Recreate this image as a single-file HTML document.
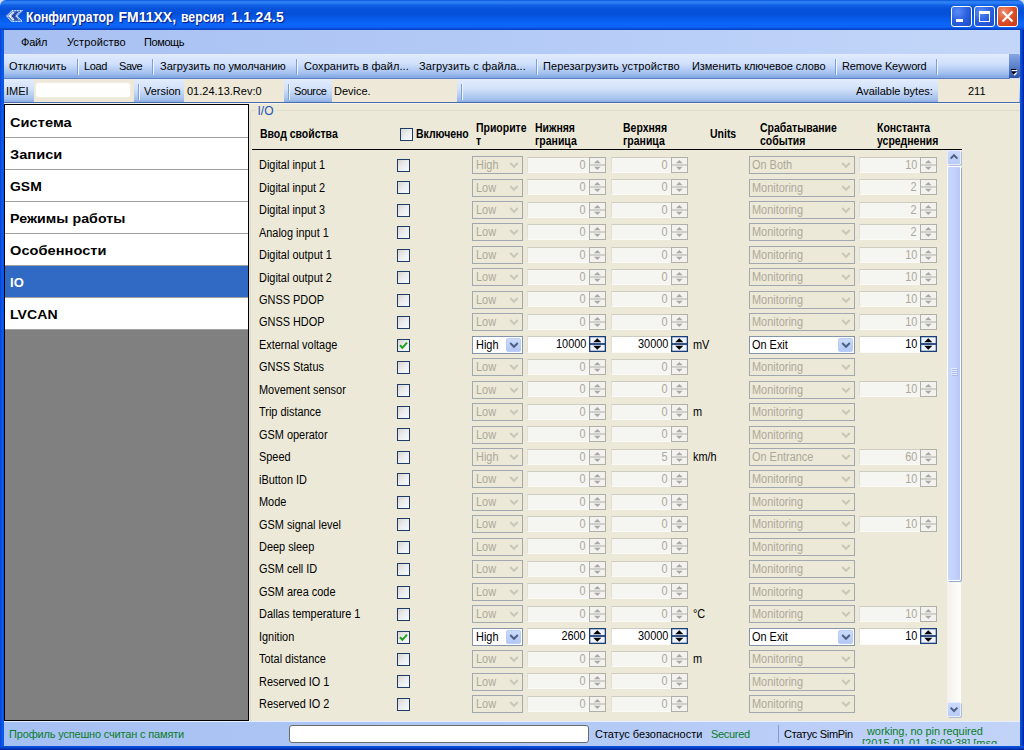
<!DOCTYPE html>
<html><head><meta charset="utf-8"><title>FM11XX</title>
<style>
*{box-sizing:border-box;margin:0;padding:0}
html,body{width:1024px;height:750px;overflow:hidden;background:#D4DCF2;font-family:"Liberation Sans",sans-serif;font-size:11px;color:#000}
.abs,.lbl,.ck,.cb,.nb,.sp{position:absolute}
#title{position:absolute;left:0;top:0;width:1024px;height:30px;background:linear-gradient(#0A55D8 0,#2A7CF2 5%,#2E80F4 10%,#1061E6 17%,#0652DA 30%,#0550D8 47%,#085CEC 65%,#0C66F8 80%,#0C62F4 91%,#0848D0 96%,#0540C4 100%);border-radius:6px 6px 0 0}
#title .tt{position:absolute;left:25px;top:9px;font-weight:bold;font-size:14px;color:#fff;letter-spacing:0;transform-origin:0 0;text-shadow:1px 1px 1px #0A1883;white-space:nowrap}
#bl{position:absolute;left:0;top:30px;width:4px;height:720px;background:linear-gradient(90deg,#0A3FD0,#0C5CEE 50%,#0A55E0)}
#br{position:absolute;left:1020px;top:30px;width:4px;height:720px;background:linear-gradient(90deg,#0855DD,#0542C8 50%,#001EA0)}
#bb{position:absolute;left:0;top:746px;width:1024px;height:4px;background:linear-gradient(#0855DD,#0542C8 50%,#001EA0)}
#menu{position:absolute;left:4px;top:30px;width:1016px;height:24px;background:linear-gradient(90deg,#A8C0F1,#B2C9F6 45%,#BFD3F8 85%,#C3D6F9)}
#menu span{position:absolute;top:6px;font-size:11px;white-space:nowrap}
#tool{position:absolute;left:4px;top:54px;width:1006px;height:25px;background:linear-gradient(#E1EBFD 0,#D0E0FB 40%,#A6C2F0 78%,#86A9E4 96%);border-bottom:1px solid #5C80C4}
#tool span{position:absolute;top:6px;font-size:11px;white-space:nowrap}
#tool i{position:absolute;top:5px;width:1px;height:16px;background:#7A9EDB;border-right:1px solid #F0F5FE;width:2px}
#ovf{position:absolute;left:1009px;top:54px;width:11px;height:24px;background:linear-gradient(#86A6E2,#5F82CC 50%,#2C52A6);border-radius:0 2px 2px 0}
#info{position:absolute;left:4px;top:79px;width:1016px;height:24px;background:linear-gradient(#E2ECFC 0,#D3E2FA 40%,#A9C4EE 80%,#86A9E2 100%)}
#info span{position:absolute;top:6px;font-size:11px;white-space:nowrap}
#info .bx{position:absolute;top:0;height:23px;background:#EDE8D8}
#info i{position:absolute;top:5px;width:2px;height:16px;background:#7A9EDB;border-right:1px solid #F0F5FE}
#infob{position:absolute;left:4px;top:102px;width:1016px;height:1px;background:#4A6CA8}
#main{position:absolute;left:4px;top:104px;width:1016px;height:618px;background:#ECE9D8}
#left{position:absolute;left:4px;top:104px;width:245px;height:617px;background:#808080;border:1px solid #000;}
#left:before{content:"";display:block;height:1px;background:#fff}
#left div{height:32px;background:#fff;border-bottom:1px solid #A0A0A0;font-weight:bold;font-size:13px;padding:9px 0 0 5px;white-space:nowrap}
#left div b{display:inline-block;transform:scaleX(1.12);transform-origin:0 0;letter-spacing:0.05px}
#left div.sel{background:#316AC5;color:#fff}
#grp{position:absolute;left:250px;top:110px;width:775px;height:612px;border:1px solid #DFDCCD;border-radius:3px}
#grpl{position:absolute;left:255.5px;top:104px;background:#ECE9D8;color:#2452B4;font-size:12px;padding:0 2px;line-height:14px}
.h{position:absolute;font-weight:bold;font-size:12px;line-height:12.5px;white-space:nowrap;transform:scaleX(.873);transform-origin:0 0}
#hl{position:absolute;left:252px;top:149px;width:710px;height:1px;background:#000}
.lbl{font-size:12px;white-space:nowrap;line-height:16px;transform:scaleX(.91);transform-origin:0 0}
.ck{width:13px;height:13px;border:1px solid #1E3C68;background:linear-gradient(135deg,#DAD5CE,#ECEDF0 50%,#F6F9FF)}
.cb{height:18px;border:1px solid #A1A8B0;background:#ECE9D8;color:#ACA899;font-size:12px}
.cb .t{position:absolute;left:3px;top:1px;line-height:14px;transform:scaleX(.91);transform-origin:0 0;white-space:nowrap}
.cb .btn{position:absolute;right:0px;top:0;width:16px;height:16px}
.cb .a{fill:none;stroke:#C9C7BA;stroke-width:2}
.cb.on{background:#fff;border-color:#8694AA;color:#000}
.cb.on .btn{right:1px;top:1px;width:15px;height:14px;background:linear-gradient(#CADBFC,#B3C8F5);border-radius:2px;border:1px solid #B8CDF6}
.cb.on .btn svg{position:absolute;left:-1px;top:-2px}
.cb.on .a{stroke:#4D6185}
.nb{height:16px;background:#F5F5F2;color:#ACA899;font-size:12px;text-align:right;padding-right:3px;line-height:14px;border-top:1px solid #CFCDC2;border-left:1px solid #E2E0D4;border-bottom:1px solid #FAFAF6}
.nb span{display:inline-block;transform:scaleX(.91);transform-origin:100% 0}
.nb.on{background:#fff;color:#000;height:17px}
.sp{width:17px;height:16px}
.sp .b{fill:#F3F2EE;stroke:#B0AFA8}
.sp .m{stroke:#B0AFA8;stroke-width:1;fill:none}
.sp .a{fill:#A9A9A4;stroke:none}
.sp.on .b{fill:#EEF3FD;stroke:#1C3E78;stroke-width:1.6}
.sp.on .m{stroke:#1C3E78;stroke-width:1.8}
.sp.on .a{fill:#000}
#sbar{position:absolute;left:947px;top:150px;width:14px;height:567px;background:linear-gradient(90deg,#F3F1EC,#FEFEFC)}
#sbar .thumb{position:absolute;left:0;top:16px;width:14px;height:415px;background:linear-gradient(90deg,#C9D7FC,#C1D1FA 60%,#B7C8F4);border:1px solid #fff;border-radius:2px;box-shadow:1px 1px 0 #98A8CC}
#sbar .thumb i{position:absolute;left:3px;width:6px;height:1px;background:#E6EDFE;box-shadow:1px 1px 0 #A9BAE6}
#sbar .ar{position:absolute;left:0;width:14px;height:15px;background:linear-gradient(#CBD9FD,#B9CBF6);border:1px solid #E6EDFD;border-radius:2px;box-shadow:1px 1px 0 #B0BCD8}
#sbar .ar svg{position:absolute;left:0;top:0}
#stat{position:absolute;left:4px;top:721px;width:1016px;height:25px;border-top:1px solid #E8EFFC;overflow:hidden;background:linear-gradient(90deg,#A5C0F2,#B0C8F5 50%,#C2D3F8);}
#stat span{position:absolute;top:6px;font-size:11px;white-space:nowrap}

.tb{position:absolute;top:6px;width:21px;height:21px;border:1px solid #fff;border-radius:3px;background:radial-gradient(circle at 30% 25%,#5B8DF5,#2A5FE0 50%,#1C49C8 100%)}
.tb.cl{background:radial-gradient(circle at 30% 25%,#F09070,#DC4A26 55%,#C23A14 100%)}
#bl,#br,#bb{z-index:5}
#stat{z-index:4}

</style></head><body>
<div id="title">
<svg class="abs" style="left:6px;top:10px" width="17" height="12" viewBox="0 0 17 12"><path d="M0.7 6 L5.8 0.6 L16 0.6 L11 6 L16 11.4 L5.8 11.4 Z" fill="#2F62D8" stroke="#F2F6FF" stroke-width="1.1" stroke-dasharray="1 0.55"/><path d="M7.6 2 L3.6 6 L7.6 10" fill="none" stroke="#FBFCFF" stroke-width="2.2" stroke-dasharray="1.3 0.35"/><path d="M11 2 L7 6 L11 10" fill="none" stroke="#27386E" stroke-width="1.8" stroke-dasharray="1 0.8"/><path d="M13.4 2.2 L9.8 6 L13.4 9.8" fill="none" stroke="#DCE6FF" stroke-width="1.2" stroke-dasharray="1 0.8"/></svg>
<div class="tt" style="left:26px;transform:scaleX(.875)">Конфигуратор</div><div class="tt" style="left:118.5px;letter-spacing:0">FM11XX,</div><div class="tt" style="left:181px;transform:scaleX(.875)">версия</div><div class="tt" style="left:231px;letter-spacing:0.3px">1.1.24.5</div>
<div class="tb" style="left:951px"><i style="position:absolute;left:4px;top:12px;width:7px;height:3px;background:#fff"></i></div>
<div class="tb" style="left:974px"><i style="position:absolute;left:4px;top:4px;width:11px;height:11px;border:1px solid #fff;border-top-width:3px"></i></div>
<div class="tb cl" style="left:997px"><svg width="19" height="19" viewBox="0 0 19 19" style="position:absolute;left:0;top:0"><path d="M4.5 4.5 L14.5 14.5 M14.5 4.5 L4.5 14.5" stroke="#fff" stroke-width="2.2" fill="none"/></svg></div>
</div>
<div id="bl"></div><div id="br"></div>
<div id="menu"><span style="left:17px;letter-spacing:-0.2px">Файл</span><span style="left:63px;letter-spacing:0.12px">Устройство</span><span style="left:140px;letter-spacing:-0.4px">Помощь</span></div>
<div id="tool">
<span style="left:5px;letter-spacing:0.25px">Отключить</span><i style="left:73px"></i>
<span style="left:80px;letter-spacing:-0.35px">Load</span><span style="left:115px;letter-spacing:-0.45px">Save</span><i style="left:148px"></i>
<span style="left:156px">Загрузить по умолчанию</span><i style="left:292px"></i>
<span style="left:300px;letter-spacing:0.07px">Сохранить в файл...</span><span style="left:415px;letter-spacing:0.1px">Загрузить с файла...</span><i style="left:532px"></i>
<span style="left:539px;letter-spacing:0.1px">Перезагрузить устройство</span><span style="left:688px;letter-spacing:-0.06px">Изменить ключевое слово</span><i style="left:831px"></i>
<span style="left:838px;letter-spacing:-0.16px">Remove Keyword</span><i style="left:932px"></i>
</div>
<div id="ovf"><svg class="abs" style="left:1px;top:14px" width="9" height="9" viewBox="0 0 9 9"><path d="M2 2.5 H7" stroke="#fff" stroke-width="1"/><path d="M2 4.5 H7.5 L4.75 7.8 Z" fill="#fff"/><path d="M1 1.5 H6" stroke="#000" stroke-width="1"/><path d="M1 3.5 H6.5 L3.75 6.6 Z" fill="#000"/></svg></div>
<div id="info">
<span style="left:2px">IMEI</span><div class="bx" style="left:30px;width:100px"></div><div class="bx" style="left:32px;width:94px;top:4px;height:14px;background:#FEFEFC;border-radius:3px;box-shadow:0 0 2px #FBF8F0"></div><i style="left:134px"></i>
<span style="left:140px">Version</span><div class="bx" style="left:180px;width:100px"></div><span style="left:183px">01.24.13.Rev:0</span><i style="left:284px"></i>
<span style="left:290px;letter-spacing:-0.4px">Source</span><div class="bx" style="left:328px;width:125px"></div><span style="left:330px">Device.</span><i style="left:457px"></i>
<span style="left:852px">Available bytes:</span><div class="bx" style="left:934px;width:81px"></div><span style="left:964px">211</span>
</div>
<div id="infob"></div><div class="abs" style="left:4px;top:103px;width:1016px;height:1px;background:#F6F4EC"></div>
<div id="main"></div>
<div id="left"><div><b>Система</b></div><div><b>Записи</b></div><div><b style="transform:scaleX(1.07)">GSM</b></div><div><b style="transform:scaleX(1.09)">Режимы работы</b></div><div><b>Особенности</b></div><div class="sel"><b style="transform:scaleX(1.0)">IO</b></div><div><b style="transform:scaleX(1.08)">LVCAN</b></div></div>
<div id="grp"></div><div id="grpl">I/O</div>
<div class="h" style="left:259.5px;top:128px">Ввод свойства</div>
<div class="ck" style="left:400px;top:128px"></div>
<div class="h" style="left:416px;top:128px">Включено</div>
<div class="h" style="left:475.5px;top:122px">Приорите<br>т</div>
<div class="h" style="left:535px;top:122px">Нижняя<br>граница</div>
<div class="h" style="left:622.5px;top:122px">Верхняя<br>граница</div>
<div class="h" style="left:710px;top:128px">Units</div>
<div class="h" style="left:760px;top:122px">Срабатывание<br>события</div>
<div class="h" style="left:877px;top:122px">Константа<br>усреднения</div>
<div id="hl"></div>
<div class="lbl" style="left:259px;top:157px">Digital input 1</div>
<div class="ck" style="left:397px;top:159px"></div>
<div class="cb" style="left:472px;top:156px;width:51px"><span class="t" style="left:3px">High</span><span class="btn"><svg width="16" height="16" viewBox="0 0 16 16"><path d="M4.2 6 L8 9.8 L11.8 6" class="a"/></svg></span></div>
<div class="nb" style="left:527px;top:157px;width:62px"><span>0</span></div><div class="sp" style="left:589px;top:157px"><svg width="17" height="16" viewBox="0 0 17 16"><rect x="0.5" y="0.5" width="16" height="15" class="b"/><path d="M0.5 8 H16.5" class="m"/><path d="M5 6.2 L8.3 2.9 L11.6 6.2 Z" class="a"/><path d="M5 9.8 L8.3 13.1 L11.6 9.8 Z" class="a"/></svg></div>
<div class="nb" style="left:611px;top:157px;width:60px"><span>0</span></div><div class="sp" style="left:671px;top:157px"><svg width="17" height="16" viewBox="0 0 17 16"><rect x="0.5" y="0.5" width="16" height="15" class="b"/><path d="M0.5 8 H16.5" class="m"/><path d="M5 6.2 L8.3 2.9 L11.6 6.2 Z" class="a"/><path d="M5 9.8 L8.3 13.1 L11.6 9.8 Z" class="a"/></svg></div>
<div class="cb" style="left:749px;top:156px;width:106px"><span class="t" style="left:2px">On Both</span><span class="btn"><svg width="16" height="16" viewBox="0 0 16 16"><path d="M4.2 6 L8 9.8 L11.8 6" class="a"/></svg></span></div>
<div class="nb" style="left:859px;top:157px;width:61px"><span>10</span></div><div class="sp" style="left:920px;top:157px"><svg width="17" height="16" viewBox="0 0 17 16"><rect x="0.5" y="0.5" width="16" height="15" class="b"/><path d="M0.5 8 H16.5" class="m"/><path d="M5 6.2 L8.3 2.9 L11.6 6.2 Z" class="a"/><path d="M5 9.8 L8.3 13.1 L11.6 9.8 Z" class="a"/></svg></div>
<div class="lbl" style="left:259px;top:180px">Digital input 2</div>
<div class="ck" style="left:397px;top:181px"></div>
<div class="cb" style="left:472px;top:179px;width:51px"><span class="t" style="left:3px">Low</span><span class="btn"><svg width="16" height="16" viewBox="0 0 16 16"><path d="M4.2 6 L8 9.8 L11.8 6" class="a"/></svg></span></div>
<div class="nb" style="left:527px;top:179px;width:62px"><span>0</span></div><div class="sp" style="left:589px;top:179px"><svg width="17" height="16" viewBox="0 0 17 16"><rect x="0.5" y="0.5" width="16" height="15" class="b"/><path d="M0.5 8 H16.5" class="m"/><path d="M5 6.2 L8.3 2.9 L11.6 6.2 Z" class="a"/><path d="M5 9.8 L8.3 13.1 L11.6 9.8 Z" class="a"/></svg></div>
<div class="nb" style="left:611px;top:179px;width:60px"><span>0</span></div><div class="sp" style="left:671px;top:179px"><svg width="17" height="16" viewBox="0 0 17 16"><rect x="0.5" y="0.5" width="16" height="15" class="b"/><path d="M0.5 8 H16.5" class="m"/><path d="M5 6.2 L8.3 2.9 L11.6 6.2 Z" class="a"/><path d="M5 9.8 L8.3 13.1 L11.6 9.8 Z" class="a"/></svg></div>
<div class="cb" style="left:749px;top:179px;width:106px"><span class="t" style="left:2px">Monitoring</span><span class="btn"><svg width="16" height="16" viewBox="0 0 16 16"><path d="M4.2 6 L8 9.8 L11.8 6" class="a"/></svg></span></div>
<div class="nb" style="left:859px;top:179px;width:61px"><span>2</span></div><div class="sp" style="left:920px;top:179px"><svg width="17" height="16" viewBox="0 0 17 16"><rect x="0.5" y="0.5" width="16" height="15" class="b"/><path d="M0.5 8 H16.5" class="m"/><path d="M5 6.2 L8.3 2.9 L11.6 6.2 Z" class="a"/><path d="M5 9.8 L8.3 13.1 L11.6 9.8 Z" class="a"/></svg></div>
<div class="lbl" style="left:259px;top:202px">Digital input 3</div>
<div class="ck" style="left:397px;top:204px"></div>
<div class="cb" style="left:472px;top:201px;width:51px"><span class="t" style="left:3px">Low</span><span class="btn"><svg width="16" height="16" viewBox="0 0 16 16"><path d="M4.2 6 L8 9.8 L11.8 6" class="a"/></svg></span></div>
<div class="nb" style="left:527px;top:202px;width:62px"><span>0</span></div><div class="sp" style="left:589px;top:202px"><svg width="17" height="16" viewBox="0 0 17 16"><rect x="0.5" y="0.5" width="16" height="15" class="b"/><path d="M0.5 8 H16.5" class="m"/><path d="M5 6.2 L8.3 2.9 L11.6 6.2 Z" class="a"/><path d="M5 9.8 L8.3 13.1 L11.6 9.8 Z" class="a"/></svg></div>
<div class="nb" style="left:611px;top:202px;width:60px"><span>0</span></div><div class="sp" style="left:671px;top:202px"><svg width="17" height="16" viewBox="0 0 17 16"><rect x="0.5" y="0.5" width="16" height="15" class="b"/><path d="M0.5 8 H16.5" class="m"/><path d="M5 6.2 L8.3 2.9 L11.6 6.2 Z" class="a"/><path d="M5 9.8 L8.3 13.1 L11.6 9.8 Z" class="a"/></svg></div>
<div class="cb" style="left:749px;top:201px;width:106px"><span class="t" style="left:2px">Monitoring</span><span class="btn"><svg width="16" height="16" viewBox="0 0 16 16"><path d="M4.2 6 L8 9.8 L11.8 6" class="a"/></svg></span></div>
<div class="nb" style="left:859px;top:202px;width:61px"><span>2</span></div><div class="sp" style="left:920px;top:202px"><svg width="17" height="16" viewBox="0 0 17 16"><rect x="0.5" y="0.5" width="16" height="15" class="b"/><path d="M0.5 8 H16.5" class="m"/><path d="M5 6.2 L8.3 2.9 L11.6 6.2 Z" class="a"/><path d="M5 9.8 L8.3 13.1 L11.6 9.8 Z" class="a"/></svg></div>
<div class="lbl" style="left:259px;top:225px">Analog input 1</div>
<div class="ck" style="left:397px;top:226px"></div>
<div class="cb" style="left:472px;top:223px;width:51px"><span class="t" style="left:3px">Low</span><span class="btn"><svg width="16" height="16" viewBox="0 0 16 16"><path d="M4.2 6 L8 9.8 L11.8 6" class="a"/></svg></span></div>
<div class="nb" style="left:527px;top:224px;width:62px"><span>0</span></div><div class="sp" style="left:589px;top:224px"><svg width="17" height="16" viewBox="0 0 17 16"><rect x="0.5" y="0.5" width="16" height="15" class="b"/><path d="M0.5 8 H16.5" class="m"/><path d="M5 6.2 L8.3 2.9 L11.6 6.2 Z" class="a"/><path d="M5 9.8 L8.3 13.1 L11.6 9.8 Z" class="a"/></svg></div>
<div class="nb" style="left:611px;top:224px;width:60px"><span>0</span></div><div class="sp" style="left:671px;top:224px"><svg width="17" height="16" viewBox="0 0 17 16"><rect x="0.5" y="0.5" width="16" height="15" class="b"/><path d="M0.5 8 H16.5" class="m"/><path d="M5 6.2 L8.3 2.9 L11.6 6.2 Z" class="a"/><path d="M5 9.8 L8.3 13.1 L11.6 9.8 Z" class="a"/></svg></div>
<div class="cb" style="left:749px;top:223px;width:106px"><span class="t" style="left:2px">Monitoring</span><span class="btn"><svg width="16" height="16" viewBox="0 0 16 16"><path d="M4.2 6 L8 9.8 L11.8 6" class="a"/></svg></span></div>
<div class="nb" style="left:859px;top:224px;width:61px"><span>2</span></div><div class="sp" style="left:920px;top:224px"><svg width="17" height="16" viewBox="0 0 17 16"><rect x="0.5" y="0.5" width="16" height="15" class="b"/><path d="M0.5 8 H16.5" class="m"/><path d="M5 6.2 L8.3 2.9 L11.6 6.2 Z" class="a"/><path d="M5 9.8 L8.3 13.1 L11.6 9.8 Z" class="a"/></svg></div>
<div class="lbl" style="left:259px;top:247px">Digital output 1</div>
<div class="ck" style="left:397px;top:249px"></div>
<div class="cb" style="left:472px;top:246px;width:51px"><span class="t" style="left:3px">Low</span><span class="btn"><svg width="16" height="16" viewBox="0 0 16 16"><path d="M4.2 6 L8 9.8 L11.8 6" class="a"/></svg></span></div>
<div class="nb" style="left:527px;top:247px;width:62px"><span>0</span></div><div class="sp" style="left:589px;top:247px"><svg width="17" height="16" viewBox="0 0 17 16"><rect x="0.5" y="0.5" width="16" height="15" class="b"/><path d="M0.5 8 H16.5" class="m"/><path d="M5 6.2 L8.3 2.9 L11.6 6.2 Z" class="a"/><path d="M5 9.8 L8.3 13.1 L11.6 9.8 Z" class="a"/></svg></div>
<div class="nb" style="left:611px;top:247px;width:60px"><span>0</span></div><div class="sp" style="left:671px;top:247px"><svg width="17" height="16" viewBox="0 0 17 16"><rect x="0.5" y="0.5" width="16" height="15" class="b"/><path d="M0.5 8 H16.5" class="m"/><path d="M5 6.2 L8.3 2.9 L11.6 6.2 Z" class="a"/><path d="M5 9.8 L8.3 13.1 L11.6 9.8 Z" class="a"/></svg></div>
<div class="cb" style="left:749px;top:246px;width:106px"><span class="t" style="left:2px">Monitoring</span><span class="btn"><svg width="16" height="16" viewBox="0 0 16 16"><path d="M4.2 6 L8 9.8 L11.8 6" class="a"/></svg></span></div>
<div class="nb" style="left:859px;top:247px;width:61px"><span>10</span></div><div class="sp" style="left:920px;top:247px"><svg width="17" height="16" viewBox="0 0 17 16"><rect x="0.5" y="0.5" width="16" height="15" class="b"/><path d="M0.5 8 H16.5" class="m"/><path d="M5 6.2 L8.3 2.9 L11.6 6.2 Z" class="a"/><path d="M5 9.8 L8.3 13.1 L11.6 9.8 Z" class="a"/></svg></div>
<div class="lbl" style="left:259px;top:270px">Digital output 2</div>
<div class="ck" style="left:397px;top:271px"></div>
<div class="cb" style="left:472px;top:268px;width:51px"><span class="t" style="left:3px">Low</span><span class="btn"><svg width="16" height="16" viewBox="0 0 16 16"><path d="M4.2 6 L8 9.8 L11.8 6" class="a"/></svg></span></div>
<div class="nb" style="left:527px;top:269px;width:62px"><span>0</span></div><div class="sp" style="left:589px;top:269px"><svg width="17" height="16" viewBox="0 0 17 16"><rect x="0.5" y="0.5" width="16" height="15" class="b"/><path d="M0.5 8 H16.5" class="m"/><path d="M5 6.2 L8.3 2.9 L11.6 6.2 Z" class="a"/><path d="M5 9.8 L8.3 13.1 L11.6 9.8 Z" class="a"/></svg></div>
<div class="nb" style="left:611px;top:269px;width:60px"><span>0</span></div><div class="sp" style="left:671px;top:269px"><svg width="17" height="16" viewBox="0 0 17 16"><rect x="0.5" y="0.5" width="16" height="15" class="b"/><path d="M0.5 8 H16.5" class="m"/><path d="M5 6.2 L8.3 2.9 L11.6 6.2 Z" class="a"/><path d="M5 9.8 L8.3 13.1 L11.6 9.8 Z" class="a"/></svg></div>
<div class="cb" style="left:749px;top:268px;width:106px"><span class="t" style="left:2px">Monitoring</span><span class="btn"><svg width="16" height="16" viewBox="0 0 16 16"><path d="M4.2 6 L8 9.8 L11.8 6" class="a"/></svg></span></div>
<div class="nb" style="left:859px;top:269px;width:61px"><span>10</span></div><div class="sp" style="left:920px;top:269px"><svg width="17" height="16" viewBox="0 0 17 16"><rect x="0.5" y="0.5" width="16" height="15" class="b"/><path d="M0.5 8 H16.5" class="m"/><path d="M5 6.2 L8.3 2.9 L11.6 6.2 Z" class="a"/><path d="M5 9.8 L8.3 13.1 L11.6 9.8 Z" class="a"/></svg></div>
<div class="lbl" style="left:259px;top:292px">GNSS PDOP</div>
<div class="ck" style="left:397px;top:294px"></div>
<div class="cb" style="left:472px;top:291px;width:51px"><span class="t" style="left:3px">Low</span><span class="btn"><svg width="16" height="16" viewBox="0 0 16 16"><path d="M4.2 6 L8 9.8 L11.8 6" class="a"/></svg></span></div>
<div class="nb" style="left:527px;top:291px;width:62px"><span>0</span></div><div class="sp" style="left:589px;top:291px"><svg width="17" height="16" viewBox="0 0 17 16"><rect x="0.5" y="0.5" width="16" height="15" class="b"/><path d="M0.5 8 H16.5" class="m"/><path d="M5 6.2 L8.3 2.9 L11.6 6.2 Z" class="a"/><path d="M5 9.8 L8.3 13.1 L11.6 9.8 Z" class="a"/></svg></div>
<div class="nb" style="left:611px;top:291px;width:60px"><span>0</span></div><div class="sp" style="left:671px;top:291px"><svg width="17" height="16" viewBox="0 0 17 16"><rect x="0.5" y="0.5" width="16" height="15" class="b"/><path d="M0.5 8 H16.5" class="m"/><path d="M5 6.2 L8.3 2.9 L11.6 6.2 Z" class="a"/><path d="M5 9.8 L8.3 13.1 L11.6 9.8 Z" class="a"/></svg></div>
<div class="cb" style="left:749px;top:291px;width:106px"><span class="t" style="left:2px">Monitoring</span><span class="btn"><svg width="16" height="16" viewBox="0 0 16 16"><path d="M4.2 6 L8 9.8 L11.8 6" class="a"/></svg></span></div>
<div class="nb" style="left:859px;top:291px;width:61px"><span>10</span></div><div class="sp" style="left:920px;top:291px"><svg width="17" height="16" viewBox="0 0 17 16"><rect x="0.5" y="0.5" width="16" height="15" class="b"/><path d="M0.5 8 H16.5" class="m"/><path d="M5 6.2 L8.3 2.9 L11.6 6.2 Z" class="a"/><path d="M5 9.8 L8.3 13.1 L11.6 9.8 Z" class="a"/></svg></div>
<div class="lbl" style="left:259px;top:314px">GNSS HDOP</div>
<div class="ck" style="left:397px;top:316px"></div>
<div class="cb" style="left:472px;top:313px;width:51px"><span class="t" style="left:3px">Low</span><span class="btn"><svg width="16" height="16" viewBox="0 0 16 16"><path d="M4.2 6 L8 9.8 L11.8 6" class="a"/></svg></span></div>
<div class="nb" style="left:527px;top:314px;width:62px"><span>0</span></div><div class="sp" style="left:589px;top:314px"><svg width="17" height="16" viewBox="0 0 17 16"><rect x="0.5" y="0.5" width="16" height="15" class="b"/><path d="M0.5 8 H16.5" class="m"/><path d="M5 6.2 L8.3 2.9 L11.6 6.2 Z" class="a"/><path d="M5 9.8 L8.3 13.1 L11.6 9.8 Z" class="a"/></svg></div>
<div class="nb" style="left:611px;top:314px;width:60px"><span>0</span></div><div class="sp" style="left:671px;top:314px"><svg width="17" height="16" viewBox="0 0 17 16"><rect x="0.5" y="0.5" width="16" height="15" class="b"/><path d="M0.5 8 H16.5" class="m"/><path d="M5 6.2 L8.3 2.9 L11.6 6.2 Z" class="a"/><path d="M5 9.8 L8.3 13.1 L11.6 9.8 Z" class="a"/></svg></div>
<div class="cb" style="left:749px;top:313px;width:106px"><span class="t" style="left:2px">Monitoring</span><span class="btn"><svg width="16" height="16" viewBox="0 0 16 16"><path d="M4.2 6 L8 9.8 L11.8 6" class="a"/></svg></span></div>
<div class="nb" style="left:859px;top:314px;width:61px"><span>10</span></div><div class="sp" style="left:920px;top:314px"><svg width="17" height="16" viewBox="0 0 17 16"><rect x="0.5" y="0.5" width="16" height="15" class="b"/><path d="M0.5 8 H16.5" class="m"/><path d="M5 6.2 L8.3 2.9 L11.6 6.2 Z" class="a"/><path d="M5 9.8 L8.3 13.1 L11.6 9.8 Z" class="a"/></svg></div>
<div class="lbl" style="left:259px;top:337px">External voltage</div>
<div class="ck" style="left:397px;top:339px"><svg width="11" height="11" viewBox="0 0 11 11"><path d="M2 5.2 L4.4 7.8 L9 2.6" fill="none" stroke="#21A121" stroke-width="2"/></svg></div>
<div class="cb on" style="left:472px;top:336px;width:51px"><span class="t" style="left:3px">High</span><span class="btn"><svg width="16" height="16" viewBox="0 0 16 16"><path d="M4.2 6 L8 9.8 L11.8 6" class="a"/></svg></span></div>
<div class="nb on" style="left:527px;top:336px;width:62px"><span>10000</span></div><div class="sp on" style="left:589px;top:336px"><svg width="17" height="16" viewBox="0 0 17 16"><rect x="0.5" y="0.5" width="16" height="15" class="b"/><path d="M0.5 8 H16.5" class="m"/><path d="M4.2 6.3 L8.3 2.2 L12.4 6.3 Z" class="a"/><path d="M4.2 9.7 L8.3 13.8 L12.4 9.7 Z" class="a"/></svg></div>
<div class="nb on" style="left:611px;top:336px;width:60px"><span>30000</span></div><div class="sp on" style="left:671px;top:336px"><svg width="17" height="16" viewBox="0 0 17 16"><rect x="0.5" y="0.5" width="16" height="15" class="b"/><path d="M0.5 8 H16.5" class="m"/><path d="M4.2 6.3 L8.3 2.2 L12.4 6.3 Z" class="a"/><path d="M4.2 9.7 L8.3 13.8 L12.4 9.7 Z" class="a"/></svg></div>
<div class="lbl" style="left:693px;top:337px">mV</div>
<div class="cb on" style="left:749px;top:336px;width:106px"><span class="t" style="left:2px">On Exit</span><span class="btn"><svg width="16" height="16" viewBox="0 0 16 16"><path d="M4.2 6 L8 9.8 L11.8 6" class="a"/></svg></span></div>
<div class="nb on" style="left:859px;top:336px;width:61px"><span>10</span></div><div class="sp on" style="left:920px;top:336px"><svg width="17" height="16" viewBox="0 0 17 16"><rect x="0.5" y="0.5" width="16" height="15" class="b"/><path d="M0.5 8 H16.5" class="m"/><path d="M4.2 6.3 L8.3 2.2 L12.4 6.3 Z" class="a"/><path d="M4.2 9.7 L8.3 13.8 L12.4 9.7 Z" class="a"/></svg></div>
<div class="lbl" style="left:259px;top:359px">GNSS Status</div>
<div class="ck" style="left:397px;top:361px"></div>
<div class="cb" style="left:472px;top:358px;width:51px"><span class="t" style="left:3px">Low</span><span class="btn"><svg width="16" height="16" viewBox="0 0 16 16"><path d="M4.2 6 L8 9.8 L11.8 6" class="a"/></svg></span></div>
<div class="nb" style="left:527px;top:359px;width:62px"><span>0</span></div><div class="sp" style="left:589px;top:359px"><svg width="17" height="16" viewBox="0 0 17 16"><rect x="0.5" y="0.5" width="16" height="15" class="b"/><path d="M0.5 8 H16.5" class="m"/><path d="M5 6.2 L8.3 2.9 L11.6 6.2 Z" class="a"/><path d="M5 9.8 L8.3 13.1 L11.6 9.8 Z" class="a"/></svg></div>
<div class="nb" style="left:611px;top:359px;width:60px"><span>0</span></div><div class="sp" style="left:671px;top:359px"><svg width="17" height="16" viewBox="0 0 17 16"><rect x="0.5" y="0.5" width="16" height="15" class="b"/><path d="M0.5 8 H16.5" class="m"/><path d="M5 6.2 L8.3 2.9 L11.6 6.2 Z" class="a"/><path d="M5 9.8 L8.3 13.1 L11.6 9.8 Z" class="a"/></svg></div>
<div class="cb" style="left:749px;top:358px;width:106px"><span class="t" style="left:2px">Monitoring</span><span class="btn"><svg width="16" height="16" viewBox="0 0 16 16"><path d="M4.2 6 L8 9.8 L11.8 6" class="a"/></svg></span></div>
<div class="lbl" style="left:259px;top:382px">Movement sensor</div>
<div class="ck" style="left:397px;top:384px"></div>
<div class="cb" style="left:472px;top:381px;width:51px"><span class="t" style="left:3px">Low</span><span class="btn"><svg width="16" height="16" viewBox="0 0 16 16"><path d="M4.2 6 L8 9.8 L11.8 6" class="a"/></svg></span></div>
<div class="nb" style="left:527px;top:381px;width:62px"><span>0</span></div><div class="sp" style="left:589px;top:381px"><svg width="17" height="16" viewBox="0 0 17 16"><rect x="0.5" y="0.5" width="16" height="15" class="b"/><path d="M0.5 8 H16.5" class="m"/><path d="M5 6.2 L8.3 2.9 L11.6 6.2 Z" class="a"/><path d="M5 9.8 L8.3 13.1 L11.6 9.8 Z" class="a"/></svg></div>
<div class="nb" style="left:611px;top:381px;width:60px"><span>0</span></div><div class="sp" style="left:671px;top:381px"><svg width="17" height="16" viewBox="0 0 17 16"><rect x="0.5" y="0.5" width="16" height="15" class="b"/><path d="M0.5 8 H16.5" class="m"/><path d="M5 6.2 L8.3 2.9 L11.6 6.2 Z" class="a"/><path d="M5 9.8 L8.3 13.1 L11.6 9.8 Z" class="a"/></svg></div>
<div class="cb" style="left:749px;top:381px;width:106px"><span class="t" style="left:2px">Monitoring</span><span class="btn"><svg width="16" height="16" viewBox="0 0 16 16"><path d="M4.2 6 L8 9.8 L11.8 6" class="a"/></svg></span></div>
<div class="nb" style="left:859px;top:381px;width:61px"><span>10</span></div><div class="sp" style="left:920px;top:381px"><svg width="17" height="16" viewBox="0 0 17 16"><rect x="0.5" y="0.5" width="16" height="15" class="b"/><path d="M0.5 8 H16.5" class="m"/><path d="M5 6.2 L8.3 2.9 L11.6 6.2 Z" class="a"/><path d="M5 9.8 L8.3 13.1 L11.6 9.8 Z" class="a"/></svg></div>
<div class="lbl" style="left:259px;top:404px">Trip distance</div>
<div class="ck" style="left:397px;top:406px"></div>
<div class="cb" style="left:472px;top:403px;width:51px"><span class="t" style="left:3px">Low</span><span class="btn"><svg width="16" height="16" viewBox="0 0 16 16"><path d="M4.2 6 L8 9.8 L11.8 6" class="a"/></svg></span></div>
<div class="nb" style="left:527px;top:404px;width:62px"><span>0</span></div><div class="sp" style="left:589px;top:404px"><svg width="17" height="16" viewBox="0 0 17 16"><rect x="0.5" y="0.5" width="16" height="15" class="b"/><path d="M0.5 8 H16.5" class="m"/><path d="M5 6.2 L8.3 2.9 L11.6 6.2 Z" class="a"/><path d="M5 9.8 L8.3 13.1 L11.6 9.8 Z" class="a"/></svg></div>
<div class="nb" style="left:611px;top:404px;width:60px"><span>0</span></div><div class="sp" style="left:671px;top:404px"><svg width="17" height="16" viewBox="0 0 17 16"><rect x="0.5" y="0.5" width="16" height="15" class="b"/><path d="M0.5 8 H16.5" class="m"/><path d="M5 6.2 L8.3 2.9 L11.6 6.2 Z" class="a"/><path d="M5 9.8 L8.3 13.1 L11.6 9.8 Z" class="a"/></svg></div>
<div class="lbl" style="left:693px;top:404px">m</div>
<div class="cb" style="left:749px;top:403px;width:106px"><span class="t" style="left:2px">Monitoring</span><span class="btn"><svg width="16" height="16" viewBox="0 0 16 16"><path d="M4.2 6 L8 9.8 L11.8 6" class="a"/></svg></span></div>
<div class="lbl" style="left:259px;top:427px">GSM operator</div>
<div class="ck" style="left:397px;top:428px"></div>
<div class="cb" style="left:472px;top:426px;width:51px"><span class="t" style="left:3px">Low</span><span class="btn"><svg width="16" height="16" viewBox="0 0 16 16"><path d="M4.2 6 L8 9.8 L11.8 6" class="a"/></svg></span></div>
<div class="nb" style="left:527px;top:426px;width:62px"><span>0</span></div><div class="sp" style="left:589px;top:426px"><svg width="17" height="16" viewBox="0 0 17 16"><rect x="0.5" y="0.5" width="16" height="15" class="b"/><path d="M0.5 8 H16.5" class="m"/><path d="M5 6.2 L8.3 2.9 L11.6 6.2 Z" class="a"/><path d="M5 9.8 L8.3 13.1 L11.6 9.8 Z" class="a"/></svg></div>
<div class="nb" style="left:611px;top:426px;width:60px"><span>0</span></div><div class="sp" style="left:671px;top:426px"><svg width="17" height="16" viewBox="0 0 17 16"><rect x="0.5" y="0.5" width="16" height="15" class="b"/><path d="M0.5 8 H16.5" class="m"/><path d="M5 6.2 L8.3 2.9 L11.6 6.2 Z" class="a"/><path d="M5 9.8 L8.3 13.1 L11.6 9.8 Z" class="a"/></svg></div>
<div class="cb" style="left:749px;top:426px;width:106px"><span class="t" style="left:2px">Monitoring</span><span class="btn"><svg width="16" height="16" viewBox="0 0 16 16"><path d="M4.2 6 L8 9.8 L11.8 6" class="a"/></svg></span></div>
<div class="lbl" style="left:259px;top:449px">Speed</div>
<div class="ck" style="left:397px;top:451px"></div>
<div class="cb" style="left:472px;top:448px;width:51px"><span class="t" style="left:3px">High</span><span class="btn"><svg width="16" height="16" viewBox="0 0 16 16"><path d="M4.2 6 L8 9.8 L11.8 6" class="a"/></svg></span></div>
<div class="nb" style="left:527px;top:449px;width:62px"><span>0</span></div><div class="sp" style="left:589px;top:449px"><svg width="17" height="16" viewBox="0 0 17 16"><rect x="0.5" y="0.5" width="16" height="15" class="b"/><path d="M0.5 8 H16.5" class="m"/><path d="M5 6.2 L8.3 2.9 L11.6 6.2 Z" class="a"/><path d="M5 9.8 L8.3 13.1 L11.6 9.8 Z" class="a"/></svg></div>
<div class="nb" style="left:611px;top:449px;width:60px"><span>5</span></div><div class="sp" style="left:671px;top:449px"><svg width="17" height="16" viewBox="0 0 17 16"><rect x="0.5" y="0.5" width="16" height="15" class="b"/><path d="M0.5 8 H16.5" class="m"/><path d="M5 6.2 L8.3 2.9 L11.6 6.2 Z" class="a"/><path d="M5 9.8 L8.3 13.1 L11.6 9.8 Z" class="a"/></svg></div>
<div class="lbl" style="left:693px;top:449px">km/h</div>
<div class="cb" style="left:749px;top:448px;width:106px"><span class="t" style="left:2px">On Entrance</span><span class="btn"><svg width="16" height="16" viewBox="0 0 16 16"><path d="M4.2 6 L8 9.8 L11.8 6" class="a"/></svg></span></div>
<div class="nb" style="left:859px;top:449px;width:61px"><span>60</span></div><div class="sp" style="left:920px;top:449px"><svg width="17" height="16" viewBox="0 0 17 16"><rect x="0.5" y="0.5" width="16" height="15" class="b"/><path d="M0.5 8 H16.5" class="m"/><path d="M5 6.2 L8.3 2.9 L11.6 6.2 Z" class="a"/><path d="M5 9.8 L8.3 13.1 L11.6 9.8 Z" class="a"/></svg></div>
<div class="lbl" style="left:259px;top:472px">iButton ID</div>
<div class="ck" style="left:397px;top:473px"></div>
<div class="cb" style="left:472px;top:470px;width:51px"><span class="t" style="left:3px">Low</span><span class="btn"><svg width="16" height="16" viewBox="0 0 16 16"><path d="M4.2 6 L8 9.8 L11.8 6" class="a"/></svg></span></div>
<div class="nb" style="left:527px;top:471px;width:62px"><span>0</span></div><div class="sp" style="left:589px;top:471px"><svg width="17" height="16" viewBox="0 0 17 16"><rect x="0.5" y="0.5" width="16" height="15" class="b"/><path d="M0.5 8 H16.5" class="m"/><path d="M5 6.2 L8.3 2.9 L11.6 6.2 Z" class="a"/><path d="M5 9.8 L8.3 13.1 L11.6 9.8 Z" class="a"/></svg></div>
<div class="nb" style="left:611px;top:471px;width:60px"><span>0</span></div><div class="sp" style="left:671px;top:471px"><svg width="17" height="16" viewBox="0 0 17 16"><rect x="0.5" y="0.5" width="16" height="15" class="b"/><path d="M0.5 8 H16.5" class="m"/><path d="M5 6.2 L8.3 2.9 L11.6 6.2 Z" class="a"/><path d="M5 9.8 L8.3 13.1 L11.6 9.8 Z" class="a"/></svg></div>
<div class="cb" style="left:749px;top:470px;width:106px"><span class="t" style="left:2px">Monitoring</span><span class="btn"><svg width="16" height="16" viewBox="0 0 16 16"><path d="M4.2 6 L8 9.8 L11.8 6" class="a"/></svg></span></div>
<div class="nb" style="left:859px;top:471px;width:61px"><span>10</span></div><div class="sp" style="left:920px;top:471px"><svg width="17" height="16" viewBox="0 0 17 16"><rect x="0.5" y="0.5" width="16" height="15" class="b"/><path d="M0.5 8 H16.5" class="m"/><path d="M5 6.2 L8.3 2.9 L11.6 6.2 Z" class="a"/><path d="M5 9.8 L8.3 13.1 L11.6 9.8 Z" class="a"/></svg></div>
<div class="lbl" style="left:259px;top:494px">Mode</div>
<div class="ck" style="left:397px;top:496px"></div>
<div class="cb" style="left:472px;top:493px;width:51px"><span class="t" style="left:3px">Low</span><span class="btn"><svg width="16" height="16" viewBox="0 0 16 16"><path d="M4.2 6 L8 9.8 L11.8 6" class="a"/></svg></span></div>
<div class="nb" style="left:527px;top:494px;width:62px"><span>0</span></div><div class="sp" style="left:589px;top:494px"><svg width="17" height="16" viewBox="0 0 17 16"><rect x="0.5" y="0.5" width="16" height="15" class="b"/><path d="M0.5 8 H16.5" class="m"/><path d="M5 6.2 L8.3 2.9 L11.6 6.2 Z" class="a"/><path d="M5 9.8 L8.3 13.1 L11.6 9.8 Z" class="a"/></svg></div>
<div class="nb" style="left:611px;top:494px;width:60px"><span>0</span></div><div class="sp" style="left:671px;top:494px"><svg width="17" height="16" viewBox="0 0 17 16"><rect x="0.5" y="0.5" width="16" height="15" class="b"/><path d="M0.5 8 H16.5" class="m"/><path d="M5 6.2 L8.3 2.9 L11.6 6.2 Z" class="a"/><path d="M5 9.8 L8.3 13.1 L11.6 9.8 Z" class="a"/></svg></div>
<div class="cb" style="left:749px;top:493px;width:106px"><span class="t" style="left:2px">Monitoring</span><span class="btn"><svg width="16" height="16" viewBox="0 0 16 16"><path d="M4.2 6 L8 9.8 L11.8 6" class="a"/></svg></span></div>
<div class="lbl" style="left:259px;top:517px">GSM signal level</div>
<div class="ck" style="left:397px;top:518px"></div>
<div class="cb" style="left:472px;top:515px;width:51px"><span class="t" style="left:3px">Low</span><span class="btn"><svg width="16" height="16" viewBox="0 0 16 16"><path d="M4.2 6 L8 9.8 L11.8 6" class="a"/></svg></span></div>
<div class="nb" style="left:527px;top:516px;width:62px"><span>0</span></div><div class="sp" style="left:589px;top:516px"><svg width="17" height="16" viewBox="0 0 17 16"><rect x="0.5" y="0.5" width="16" height="15" class="b"/><path d="M0.5 8 H16.5" class="m"/><path d="M5 6.2 L8.3 2.9 L11.6 6.2 Z" class="a"/><path d="M5 9.8 L8.3 13.1 L11.6 9.8 Z" class="a"/></svg></div>
<div class="nb" style="left:611px;top:516px;width:60px"><span>0</span></div><div class="sp" style="left:671px;top:516px"><svg width="17" height="16" viewBox="0 0 17 16"><rect x="0.5" y="0.5" width="16" height="15" class="b"/><path d="M0.5 8 H16.5" class="m"/><path d="M5 6.2 L8.3 2.9 L11.6 6.2 Z" class="a"/><path d="M5 9.8 L8.3 13.1 L11.6 9.8 Z" class="a"/></svg></div>
<div class="cb" style="left:749px;top:515px;width:106px"><span class="t" style="left:2px">Monitoring</span><span class="btn"><svg width="16" height="16" viewBox="0 0 16 16"><path d="M4.2 6 L8 9.8 L11.8 6" class="a"/></svg></span></div>
<div class="nb" style="left:859px;top:516px;width:61px"><span>10</span></div><div class="sp" style="left:920px;top:516px"><svg width="17" height="16" viewBox="0 0 17 16"><rect x="0.5" y="0.5" width="16" height="15" class="b"/><path d="M0.5 8 H16.5" class="m"/><path d="M5 6.2 L8.3 2.9 L11.6 6.2 Z" class="a"/><path d="M5 9.8 L8.3 13.1 L11.6 9.8 Z" class="a"/></svg></div>
<div class="lbl" style="left:259px;top:539px">Deep sleep</div>
<div class="ck" style="left:397px;top:541px"></div>
<div class="cb" style="left:472px;top:538px;width:51px"><span class="t" style="left:3px">Low</span><span class="btn"><svg width="16" height="16" viewBox="0 0 16 16"><path d="M4.2 6 L8 9.8 L11.8 6" class="a"/></svg></span></div>
<div class="nb" style="left:527px;top:538px;width:62px"><span>0</span></div><div class="sp" style="left:589px;top:538px"><svg width="17" height="16" viewBox="0 0 17 16"><rect x="0.5" y="0.5" width="16" height="15" class="b"/><path d="M0.5 8 H16.5" class="m"/><path d="M5 6.2 L8.3 2.9 L11.6 6.2 Z" class="a"/><path d="M5 9.8 L8.3 13.1 L11.6 9.8 Z" class="a"/></svg></div>
<div class="nb" style="left:611px;top:538px;width:60px"><span>0</span></div><div class="sp" style="left:671px;top:538px"><svg width="17" height="16" viewBox="0 0 17 16"><rect x="0.5" y="0.5" width="16" height="15" class="b"/><path d="M0.5 8 H16.5" class="m"/><path d="M5 6.2 L8.3 2.9 L11.6 6.2 Z" class="a"/><path d="M5 9.8 L8.3 13.1 L11.6 9.8 Z" class="a"/></svg></div>
<div class="cb" style="left:749px;top:538px;width:106px"><span class="t" style="left:2px">Monitoring</span><span class="btn"><svg width="16" height="16" viewBox="0 0 16 16"><path d="M4.2 6 L8 9.8 L11.8 6" class="a"/></svg></span></div>
<div class="lbl" style="left:259px;top:561px">GSM cell ID</div>
<div class="ck" style="left:397px;top:563px"></div>
<div class="cb" style="left:472px;top:560px;width:51px"><span class="t" style="left:3px">Low</span><span class="btn"><svg width="16" height="16" viewBox="0 0 16 16"><path d="M4.2 6 L8 9.8 L11.8 6" class="a"/></svg></span></div>
<div class="nb" style="left:527px;top:561px;width:62px"><span>0</span></div><div class="sp" style="left:589px;top:561px"><svg width="17" height="16" viewBox="0 0 17 16"><rect x="0.5" y="0.5" width="16" height="15" class="b"/><path d="M0.5 8 H16.5" class="m"/><path d="M5 6.2 L8.3 2.9 L11.6 6.2 Z" class="a"/><path d="M5 9.8 L8.3 13.1 L11.6 9.8 Z" class="a"/></svg></div>
<div class="nb" style="left:611px;top:561px;width:60px"><span>0</span></div><div class="sp" style="left:671px;top:561px"><svg width="17" height="16" viewBox="0 0 17 16"><rect x="0.5" y="0.5" width="16" height="15" class="b"/><path d="M0.5 8 H16.5" class="m"/><path d="M5 6.2 L8.3 2.9 L11.6 6.2 Z" class="a"/><path d="M5 9.8 L8.3 13.1 L11.6 9.8 Z" class="a"/></svg></div>
<div class="cb" style="left:749px;top:560px;width:106px"><span class="t" style="left:2px">Monitoring</span><span class="btn"><svg width="16" height="16" viewBox="0 0 16 16"><path d="M4.2 6 L8 9.8 L11.8 6" class="a"/></svg></span></div>
<div class="lbl" style="left:259px;top:584px">GSM area code</div>
<div class="ck" style="left:397px;top:586px"></div>
<div class="cb" style="left:472px;top:583px;width:51px"><span class="t" style="left:3px">Low</span><span class="btn"><svg width="16" height="16" viewBox="0 0 16 16"><path d="M4.2 6 L8 9.8 L11.8 6" class="a"/></svg></span></div>
<div class="nb" style="left:527px;top:583px;width:62px"><span>0</span></div><div class="sp" style="left:589px;top:583px"><svg width="17" height="16" viewBox="0 0 17 16"><rect x="0.5" y="0.5" width="16" height="15" class="b"/><path d="M0.5 8 H16.5" class="m"/><path d="M5 6.2 L8.3 2.9 L11.6 6.2 Z" class="a"/><path d="M5 9.8 L8.3 13.1 L11.6 9.8 Z" class="a"/></svg></div>
<div class="nb" style="left:611px;top:583px;width:60px"><span>0</span></div><div class="sp" style="left:671px;top:583px"><svg width="17" height="16" viewBox="0 0 17 16"><rect x="0.5" y="0.5" width="16" height="15" class="b"/><path d="M0.5 8 H16.5" class="m"/><path d="M5 6.2 L8.3 2.9 L11.6 6.2 Z" class="a"/><path d="M5 9.8 L8.3 13.1 L11.6 9.8 Z" class="a"/></svg></div>
<div class="cb" style="left:749px;top:583px;width:106px"><span class="t" style="left:2px">Monitoring</span><span class="btn"><svg width="16" height="16" viewBox="0 0 16 16"><path d="M4.2 6 L8 9.8 L11.8 6" class="a"/></svg></span></div>
<div class="lbl" style="left:259px;top:606px">Dallas temperature 1</div>
<div class="ck" style="left:397px;top:608px"></div>
<div class="cb" style="left:472px;top:605px;width:51px"><span class="t" style="left:3px">Low</span><span class="btn"><svg width="16" height="16" viewBox="0 0 16 16"><path d="M4.2 6 L8 9.8 L11.8 6" class="a"/></svg></span></div>
<div class="nb" style="left:527px;top:606px;width:62px"><span>0</span></div><div class="sp" style="left:589px;top:606px"><svg width="17" height="16" viewBox="0 0 17 16"><rect x="0.5" y="0.5" width="16" height="15" class="b"/><path d="M0.5 8 H16.5" class="m"/><path d="M5 6.2 L8.3 2.9 L11.6 6.2 Z" class="a"/><path d="M5 9.8 L8.3 13.1 L11.6 9.8 Z" class="a"/></svg></div>
<div class="nb" style="left:611px;top:606px;width:60px"><span>0</span></div><div class="sp" style="left:671px;top:606px"><svg width="17" height="16" viewBox="0 0 17 16"><rect x="0.5" y="0.5" width="16" height="15" class="b"/><path d="M0.5 8 H16.5" class="m"/><path d="M5 6.2 L8.3 2.9 L11.6 6.2 Z" class="a"/><path d="M5 9.8 L8.3 13.1 L11.6 9.8 Z" class="a"/></svg></div>
<div class="lbl" style="left:693px;top:606px">°C</div>
<div class="cb" style="left:749px;top:605px;width:106px"><span class="t" style="left:2px">Monitoring</span><span class="btn"><svg width="16" height="16" viewBox="0 0 16 16"><path d="M4.2 6 L8 9.8 L11.8 6" class="a"/></svg></span></div>
<div class="nb" style="left:859px;top:606px;width:61px"><span>10</span></div><div class="sp" style="left:920px;top:606px"><svg width="17" height="16" viewBox="0 0 17 16"><rect x="0.5" y="0.5" width="16" height="15" class="b"/><path d="M0.5 8 H16.5" class="m"/><path d="M5 6.2 L8.3 2.9 L11.6 6.2 Z" class="a"/><path d="M5 9.8 L8.3 13.1 L11.6 9.8 Z" class="a"/></svg></div>
<div class="lbl" style="left:259px;top:629px">Ignition</div>
<div class="ck" style="left:397px;top:631px"><svg width="11" height="11" viewBox="0 0 11 11"><path d="M2 5.2 L4.4 7.8 L9 2.6" fill="none" stroke="#21A121" stroke-width="2"/></svg></div>
<div class="cb on" style="left:472px;top:628px;width:51px"><span class="t" style="left:3px">High</span><span class="btn"><svg width="16" height="16" viewBox="0 0 16 16"><path d="M4.2 6 L8 9.8 L11.8 6" class="a"/></svg></span></div>
<div class="nb on" style="left:527px;top:628px;width:62px"><span>2600</span></div><div class="sp on" style="left:589px;top:628px"><svg width="17" height="16" viewBox="0 0 17 16"><rect x="0.5" y="0.5" width="16" height="15" class="b"/><path d="M0.5 8 H16.5" class="m"/><path d="M4.2 6.3 L8.3 2.2 L12.4 6.3 Z" class="a"/><path d="M4.2 9.7 L8.3 13.8 L12.4 9.7 Z" class="a"/></svg></div>
<div class="nb on" style="left:611px;top:628px;width:60px"><span>30000</span></div><div class="sp on" style="left:671px;top:628px"><svg width="17" height="16" viewBox="0 0 17 16"><rect x="0.5" y="0.5" width="16" height="15" class="b"/><path d="M0.5 8 H16.5" class="m"/><path d="M4.2 6.3 L8.3 2.2 L12.4 6.3 Z" class="a"/><path d="M4.2 9.7 L8.3 13.8 L12.4 9.7 Z" class="a"/></svg></div>
<div class="cb on" style="left:749px;top:628px;width:106px"><span class="t" style="left:2px">On Exit</span><span class="btn"><svg width="16" height="16" viewBox="0 0 16 16"><path d="M4.2 6 L8 9.8 L11.8 6" class="a"/></svg></span></div>
<div class="nb on" style="left:859px;top:628px;width:61px"><span>10</span></div><div class="sp on" style="left:920px;top:628px"><svg width="17" height="16" viewBox="0 0 17 16"><rect x="0.5" y="0.5" width="16" height="15" class="b"/><path d="M0.5 8 H16.5" class="m"/><path d="M4.2 6.3 L8.3 2.2 L12.4 6.3 Z" class="a"/><path d="M4.2 9.7 L8.3 13.8 L12.4 9.7 Z" class="a"/></svg></div>
<div class="lbl" style="left:259px;top:651px">Total distance</div>
<div class="ck" style="left:397px;top:653px"></div>
<div class="cb" style="left:472px;top:650px;width:51px"><span class="t" style="left:3px">Low</span><span class="btn"><svg width="16" height="16" viewBox="0 0 16 16"><path d="M4.2 6 L8 9.8 L11.8 6" class="a"/></svg></span></div>
<div class="nb" style="left:527px;top:651px;width:62px"><span>0</span></div><div class="sp" style="left:589px;top:651px"><svg width="17" height="16" viewBox="0 0 17 16"><rect x="0.5" y="0.5" width="16" height="15" class="b"/><path d="M0.5 8 H16.5" class="m"/><path d="M5 6.2 L8.3 2.9 L11.6 6.2 Z" class="a"/><path d="M5 9.8 L8.3 13.1 L11.6 9.8 Z" class="a"/></svg></div>
<div class="nb" style="left:611px;top:651px;width:60px"><span>0</span></div><div class="sp" style="left:671px;top:651px"><svg width="17" height="16" viewBox="0 0 17 16"><rect x="0.5" y="0.5" width="16" height="15" class="b"/><path d="M0.5 8 H16.5" class="m"/><path d="M5 6.2 L8.3 2.9 L11.6 6.2 Z" class="a"/><path d="M5 9.8 L8.3 13.1 L11.6 9.8 Z" class="a"/></svg></div>
<div class="lbl" style="left:693px;top:651px">m</div>
<div class="cb" style="left:749px;top:650px;width:106px"><span class="t" style="left:2px">Monitoring</span><span class="btn"><svg width="16" height="16" viewBox="0 0 16 16"><path d="M4.2 6 L8 9.8 L11.8 6" class="a"/></svg></span></div>
<div class="lbl" style="left:259px;top:674px">Reserved IO 1</div>
<div class="ck" style="left:397px;top:675px"></div>
<div class="cb" style="left:472px;top:673px;width:51px"><span class="t" style="left:3px">Low</span><span class="btn"><svg width="16" height="16" viewBox="0 0 16 16"><path d="M4.2 6 L8 9.8 L11.8 6" class="a"/></svg></span></div>
<div class="nb" style="left:527px;top:673px;width:62px"><span>0</span></div><div class="sp" style="left:589px;top:673px"><svg width="17" height="16" viewBox="0 0 17 16"><rect x="0.5" y="0.5" width="16" height="15" class="b"/><path d="M0.5 8 H16.5" class="m"/><path d="M5 6.2 L8.3 2.9 L11.6 6.2 Z" class="a"/><path d="M5 9.8 L8.3 13.1 L11.6 9.8 Z" class="a"/></svg></div>
<div class="nb" style="left:611px;top:673px;width:60px"><span>0</span></div><div class="sp" style="left:671px;top:673px"><svg width="17" height="16" viewBox="0 0 17 16"><rect x="0.5" y="0.5" width="16" height="15" class="b"/><path d="M0.5 8 H16.5" class="m"/><path d="M5 6.2 L8.3 2.9 L11.6 6.2 Z" class="a"/><path d="M5 9.8 L8.3 13.1 L11.6 9.8 Z" class="a"/></svg></div>
<div class="cb" style="left:749px;top:673px;width:106px"><span class="t" style="left:2px">Monitoring</span><span class="btn"><svg width="16" height="16" viewBox="0 0 16 16"><path d="M4.2 6 L8 9.8 L11.8 6" class="a"/></svg></span></div>
<div class="lbl" style="left:259px;top:696px">Reserved IO 2</div>
<div class="ck" style="left:397px;top:698px"></div>
<div class="cb" style="left:472px;top:695px;width:51px"><span class="t" style="left:3px">Low</span><span class="btn"><svg width="16" height="16" viewBox="0 0 16 16"><path d="M4.2 6 L8 9.8 L11.8 6" class="a"/></svg></span></div>
<div class="nb" style="left:527px;top:696px;width:62px"><span>0</span></div><div class="sp" style="left:589px;top:696px"><svg width="17" height="16" viewBox="0 0 17 16"><rect x="0.5" y="0.5" width="16" height="15" class="b"/><path d="M0.5 8 H16.5" class="m"/><path d="M5 6.2 L8.3 2.9 L11.6 6.2 Z" class="a"/><path d="M5 9.8 L8.3 13.1 L11.6 9.8 Z" class="a"/></svg></div>
<div class="nb" style="left:611px;top:696px;width:60px"><span>0</span></div><div class="sp" style="left:671px;top:696px"><svg width="17" height="16" viewBox="0 0 17 16"><rect x="0.5" y="0.5" width="16" height="15" class="b"/><path d="M0.5 8 H16.5" class="m"/><path d="M5 6.2 L8.3 2.9 L11.6 6.2 Z" class="a"/><path d="M5 9.8 L8.3 13.1 L11.6 9.8 Z" class="a"/></svg></div>
<div class="cb" style="left:749px;top:695px;width:106px"><span class="t" style="left:2px">Monitoring</span><span class="btn"><svg width="16" height="16" viewBox="0 0 16 16"><path d="M4.2 6 L8 9.8 L11.8 6" class="a"/></svg></span></div>
<div id="sbar"><div class="ar" style="top:0"><svg width="12" height="13" viewBox="0 0 12 13"><path d="M2.6 7.6 L6 4.2 L9.4 7.6" fill="none" stroke="#4D6185" stroke-width="2"/></svg></div><div class="thumb"><i style="top:201px"></i><i style="top:203px"></i><i style="top:205px"></i><i style="top:207px"></i></div><div class="ar" style="bottom:0"><svg width="12" height="13" viewBox="0 0 12 13"><path d="M2.6 4.6 L6 8 L9.4 4.6" fill="none" stroke="#4D6185" stroke-width="2"/></svg></div></div>
<div id="stat">
<span style="left:5px;color:#0A7D28;letter-spacing:-0.17px">Профиль успешно считан с памяти</span>
<div class="abs" style="left:285px;top:3px;width:300px;height:18px;background:#fff;border:1px solid #6B6B6B;border-radius:3px"></div>
<span style="left:591px">Статус безопасности</span><span style="left:707px;color:#0A7D28;letter-spacing:-0.3px">Secured</span>
<i class="abs" style="left:774px;top:3px;width:1px;height:18px;background:#7F9DD4"></i>
<span style="left:780px;letter-spacing:-0.3px">Статус SimPin</span>
<div class="abs" style="left:850px;top:0;width:160px;height:22px;overflow:hidden"><span style="left:13px;top:3px;color:#0A7D28;letter-spacing:-0.07px">working, no pin required</span>
<span style="left:8px;top:15px;color:#0A7D28">[2015-01-01 16:09:38] [msg</span></div>
</div>
<svg class="abs" style="left:1007px;top:733px" width="12" height="12" viewBox="0 0 12 12"><g fill="#fff"><rect x="9" y="1" width="2" height="2"/><rect x="5" y="5" width="2" height="2"/><rect x="9" y="5" width="2" height="2"/><rect x="1" y="9" width="2" height="2"/><rect x="5" y="9" width="2" height="2"/><rect x="9" y="9" width="2" height="2"/></g><g fill="#8A9CC8"><rect x="8" y="0" width="2" height="2"/><rect x="4" y="4" width="2" height="2"/><rect x="8" y="4" width="2" height="2"/><rect x="0" y="8" width="2" height="2"/><rect x="4" y="8" width="2" height="2"/><rect x="8" y="8" width="2" height="2"/></g></svg>
<div id="bb"></div>
</body></html>
